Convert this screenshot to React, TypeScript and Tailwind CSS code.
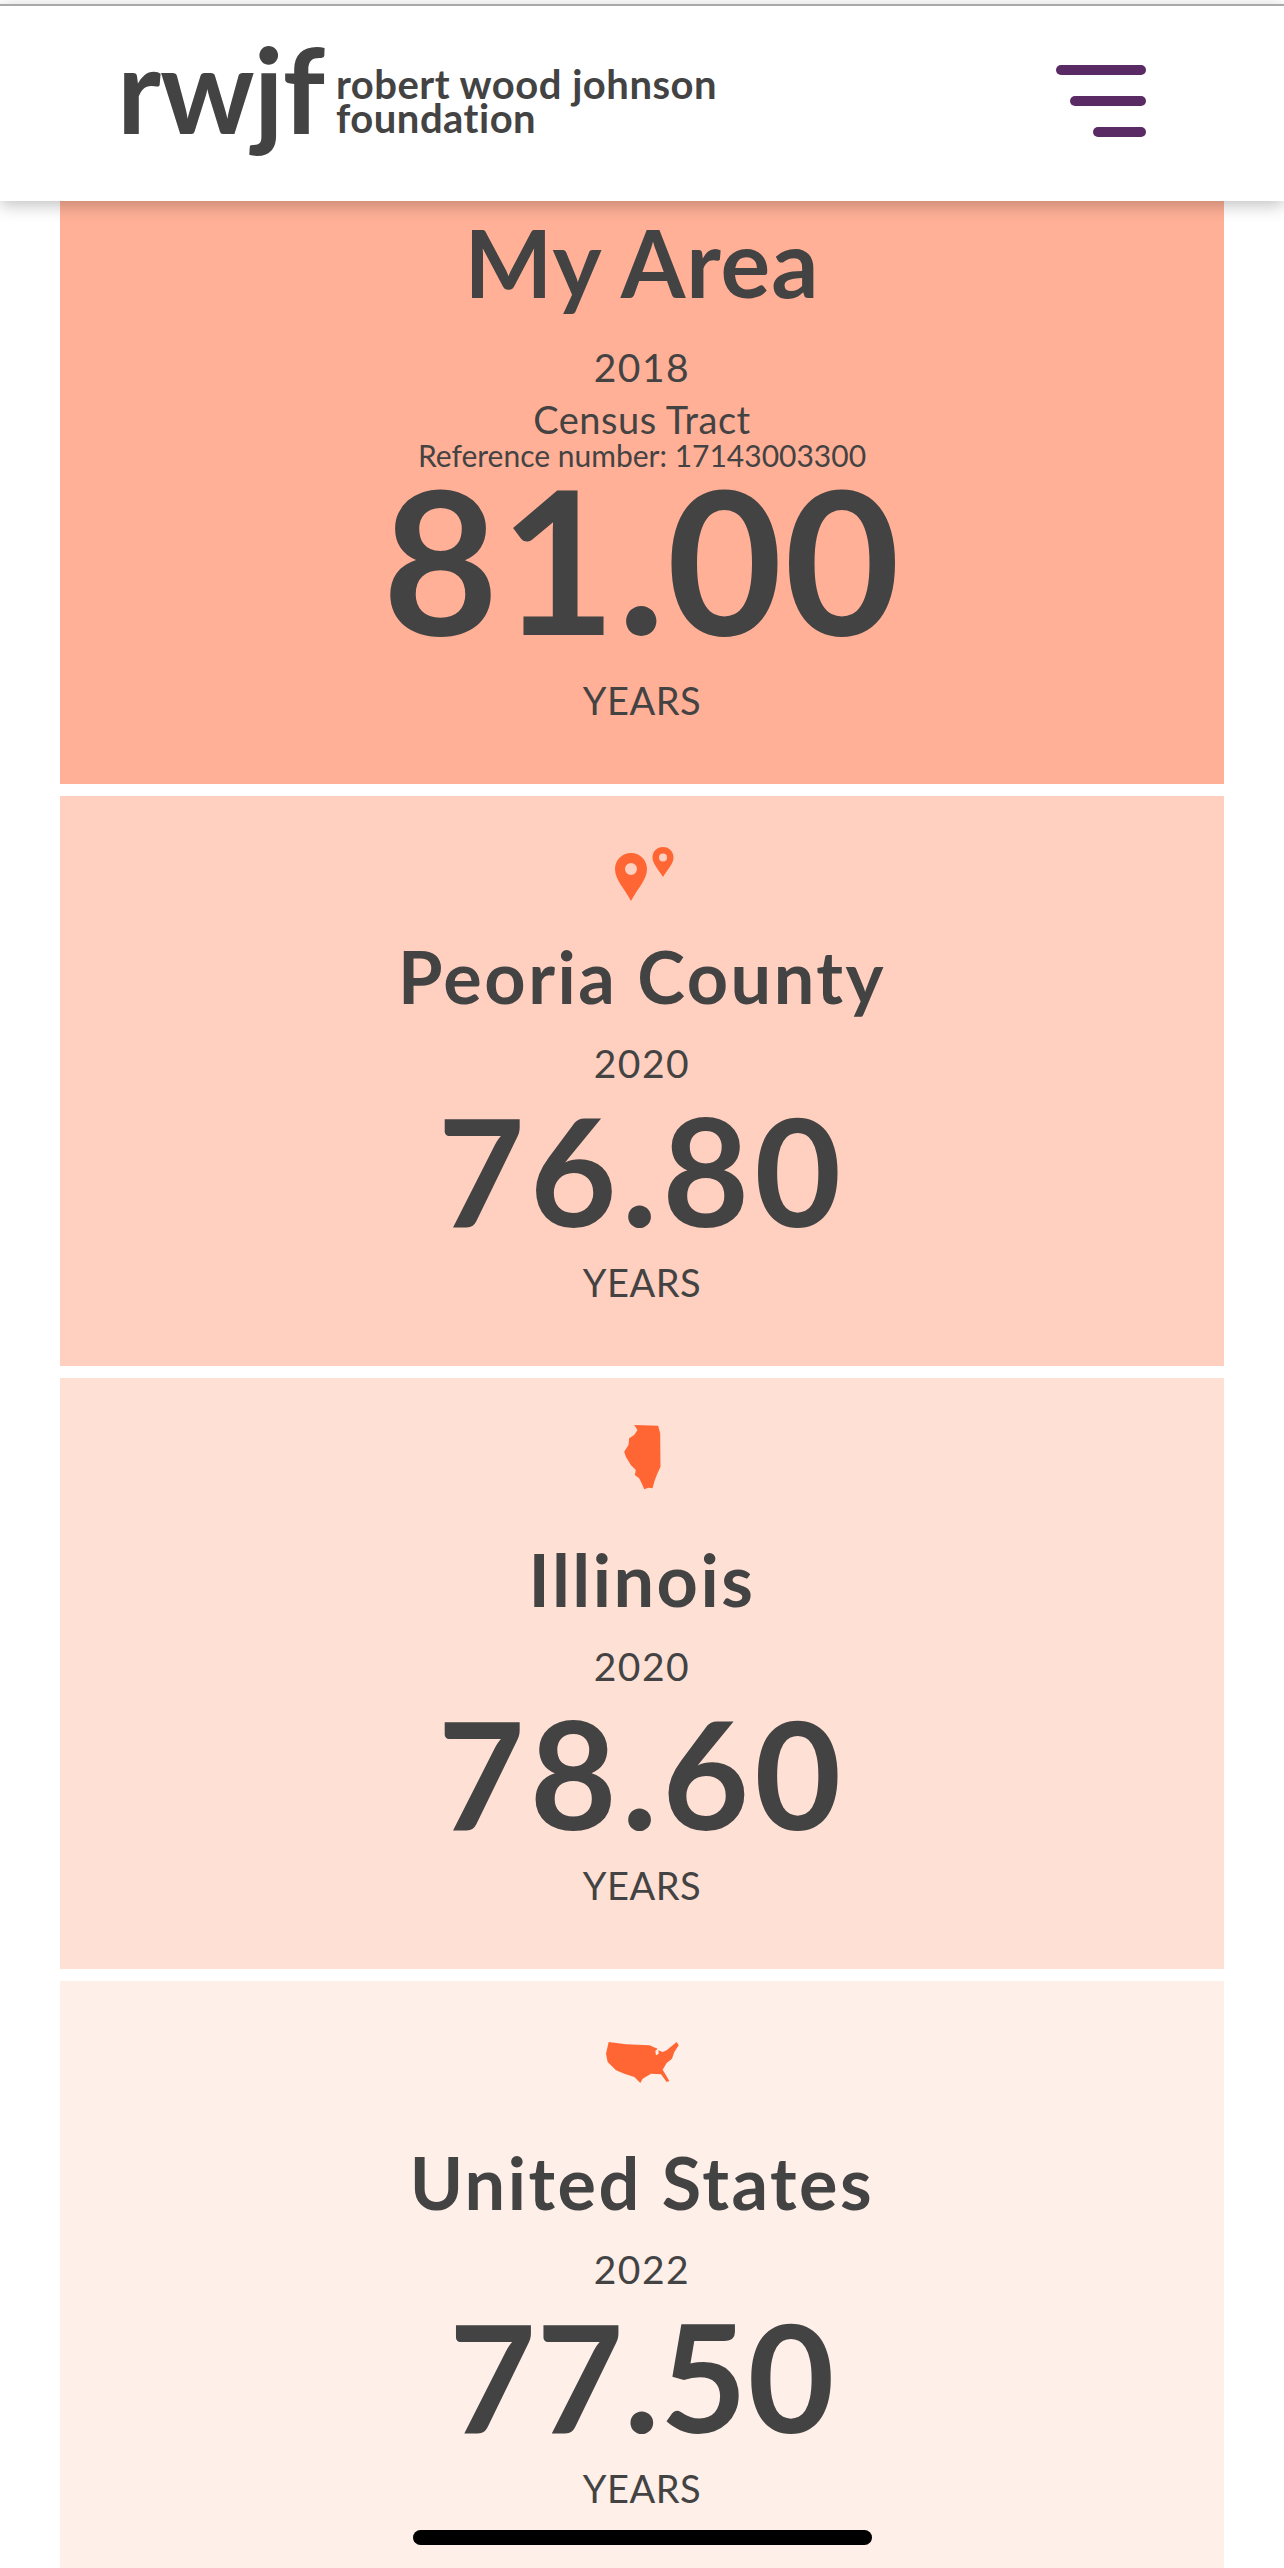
const font = { fontFamily: "Lato, 'Open Sans', sans-serif" };

function PinsIcon() {
  return (
    <svg width="60" height="54" viewBox="0 0 60 54" fill="#ff6633" aria-hidden="true">
      <path
        fillRule="evenodd"
        d="M17 6C8 6 1 13 1 22c0 11 10 20 16 32 6-12 16-21 16-32C33 13 26 6 17 6Zm0 10a6 6 0 1 1 0 12 6 6 0 0 1 0-12Z"
      />
      <path
        fillRule="evenodd"
        d="M49 0c-6 0-10.500 4.500-10.500 10.500C38.500 17 45 23 49 30c4-7 10.500-13 10.500-19.500C59.500 4.500 55 0 49 0Zm0 6.500a4 4 0 1 1 0 8 4 4 0 0 1 0-8Z"
      />
    </svg>
  );
}

function IllinoisIcon() {
  return (
    <svg width="37" height="65" viewBox="105 45 110 195" fill="#ff6633" aria-hidden="true">
      <path d="M135 45 207 47 213 70 214 170 205 190 197 210 190 235 178 233 165 238 160 225 150 205 137 195 140 180 125 165 110 140 105 125 118 105 120 85 135 75 145 60Z" />
    </svg>
  );
}

function UsaIcon() {
  return (
    <svg width="73" height="42" viewBox="80 62 219 126" fill="#ff6633" aria-hidden="true">
      <path d="M88 65 140 72 210 75 224 81 235 85 228 92 230 105 238 100 237 90 250 95 262 90 280 75 292 65 298 75 285 95 278 115 262 128 250 148 260 165 270 182 262 185 245 162 215 160 190 175 183 188 165 170 135 160 110 150 85 125 80 100Z" />
    </svg>
  );
}

function AreaCard({
  className,
  iconClass,
  icon,
  title,
  year,
  value,
  valueClass,
}: {
  className: string;
  iconClass: string;
  icon: React.ReactNode;
  title: string;
  year: string;
  value: string;
  valueClass: string;
}) {
  return (
    <section className={`flex flex-col items-center ${className}`}>
      <div className={iconClass}>{icon}</div>
      <h2 className="text-[72px] font-bold leading-[90px] tracking-[2.5px]">{title}</h2>
      <p className="mt-[17px] text-[39px] leading-[50px] tracking-[1.5px]">{year}</p>
      <p className={`mt-[21px] text-[150px] font-bold leading-[120px] ${valueClass}`}>{value}</p>
      <p className="mt-[28px] text-[38px] leading-[50px] tracking-[0.5px]">YEARS</p>
    </section>
  );
}

export default function App() {
  return (
    <div style={font} className="relative h-[2568px] w-[1284px] overflow-hidden bg-white text-[#434343]">
      <header className="relative z-10 mt-[4px] h-[197px] border-t-2 border-[#a9a9a9] bg-white shadow-[0_4px_16px_rgba(0,0,0,0.25)]">
        <div className="flex h-full items-start justify-between pl-[117px] pr-[138px]">
          <div className="flex items-start pt-[24px]">
            <span className="text-[118px] font-bold leading-[118px] tracking-[-1px]">rwjf</span>
            <span className="ml-[12px] mt-[37px] text-[40px] font-bold leading-[34px] tracking-[0.5px]">
              robert wood johnson
              <br />
              foundation
            </span>
          </div>
          <button className="mt-[59px] flex w-[90px] flex-col items-end gap-[21px]" aria-label="Menu">
            <span className="h-[10px] w-[90px] rounded-full bg-[#5a2a64]" />
            <span className="h-[10px] w-[76px] rounded-full bg-[#5a2a64]" />
            <span className="h-[10px] w-[53px] rounded-full bg-[#5a2a64]" />
          </button>
        </div>
      </header>

      <main className="flex flex-col gap-[12px] px-[60px] text-center">
        <section className="flex h-[583px] flex-col items-center bg-[#ffb097]">
          <h1 className="mt-[6px] text-[93px] font-bold leading-[110px] tracking-[1px]">My Area</h1>
          <p className="mt-[25px] text-[39px] leading-[50px] tracking-[1.5px]">2018</p>
          <p className="mt-[7px] text-[38px] leading-[40px] tracking-[0.5px]">Census Tract</p>
          <p className="mt-[1px] text-[30px] leading-[30px]">Reference number: 17143003300</p>
          <p className="mt-[8px] text-[200px] font-bold leading-[160px] tracking-[1.5px]">81.00</p>
          <p className="mt-[37px] text-[38px] leading-[50px] tracking-[0.5px]">YEARS</p>
        </section>
        <AreaCard
          className="h-[570px] bg-[#ffcfbf] pt-[51px]"
          iconClass="mb-[30px] translate-x-[2px]"
          icon={<PinsIcon />}
          title="Peoria County"
          year="2020"
          value="76.80"
          valueClass="tracking-[5px]"
        />
        <AreaCard
          className="h-[591px] bg-[#fee0d5] pt-[47px]"
          iconClass="mb-[44px]"
          icon={<IllinoisIcon />}
          title="Illinois"
          year="2020"
          value="78.60"
          valueClass="tracking-[5px]"
        />
        <AreaCard
          className="h-[600px] bg-[#feefe8] pt-[60px]"
          iconClass="mb-[54px]"
          icon={<UsaIcon />}
          title="United States"
          year="2022"
          value="77.50"
          valueClass="tracking-[0.5px]"
        />
      </main>

      <div className="absolute bottom-[23px] left-[413px] h-[15px] w-[459px] rounded-full bg-black" />
    </div>
  );
}
